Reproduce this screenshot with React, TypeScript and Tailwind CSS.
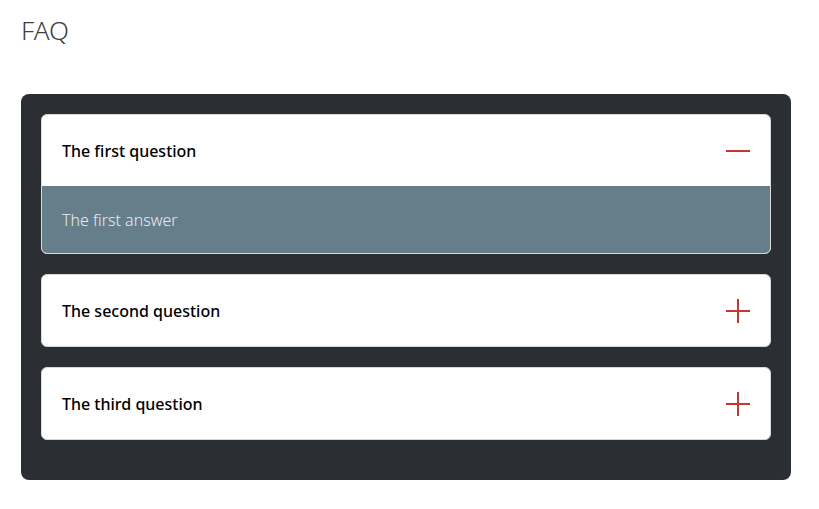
import { useState } from 'react';

const faqs = [
  { question: 'The first question', answer: 'The first answer' },
  { question: 'The second question', answer: 'The second answer' },
  { question: 'The third question', answer: 'The third answer' },
];

const ToggleIcon = ({ open }: { open: boolean }) => (
  <svg width="24" height="24" viewBox="0 0 24 24" className="shrink-0">
    <path d="M0 12h24" stroke="#c8372d" strokeWidth="2" />
    {!open && <path d="M12 0v24" stroke="#c8372d" strokeWidth="2" />}
  </svg>
);

export default function App() {
  const [openIndex, setOpenIndex] = useState<number | null>(0);

  return (
    <div className="min-h-screen bg-white px-[21px] pt-[14px]" style={{ fontFamily: '"Noto Sans", "Open Sans", sans-serif' }}>
      <h1 className="text-[26px] font-light leading-8 text-[#3b4045]">FAQ</h1>
      <div className="mt-[48px] w-[770px] rounded-lg bg-[#2b2f33] px-5 pt-5 pb-5">
        {faqs.map((faq, index) => {
          const open = openIndex === index;
          return (
            <div key={faq.question} className="mb-5 overflow-hidden rounded-md border border-[#d5dadd] bg-white">
              <button
                type="button"
                onClick={() => setOpenIndex(open ? null : index)}
                className="flex h-[71px] w-full items-center justify-between px-5 text-left"
              >
                <span className="text-[16px] font-medium text-black">{faq.question}</span>
                <ToggleIcon open={open} />
              </button>
              {open && (
                <div className="flex h-[67px] items-center bg-[#667d8a] px-5 text-[16px] font-light text-[#e6ecef]">
                  {faq.answer}
                </div>
              )}
            </div>
          );
        })}
      </div>
    </div>
  );
}
